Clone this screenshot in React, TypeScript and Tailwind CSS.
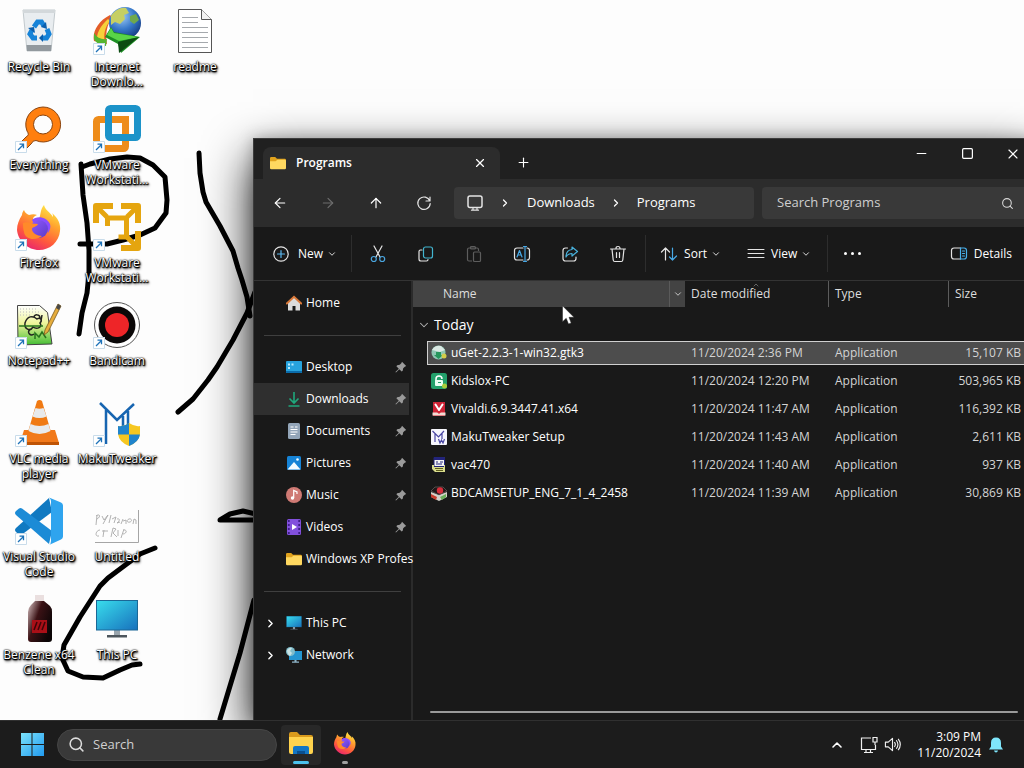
import React from 'react';
import {
  ArrowLeft,
  ArrowRight,
  ArrowUp,
  ChevronDown,
  ChevronRight,
  ChevronUp,
  Minus,
  Plus,
  Search,
  Square,
  X,
} from 'lucide-react';

/* ---------- shared drawings ---------- */

const FolderIcon = ({ className }: { className: string }) => (
  <svg viewBox="0 0 16 16" className={className}>
    <path d="M0 3.2Q0 2 1.2 2h4L7 3.8h7.8Q16 3.8 16 5v8H0z" fill="#e0a21d" />
    <path d="M0 6.2h5.6L7.4 4.8h7.4Q16 4.8 16 6v7q0 1.2-1.2 1.2H1.2Q0 14.200 0 13z" fill="#ffd860" />
  </svg>
);

const FirefoxIcon = ({ className }: { className: string }) => (
  <svg viewBox="0 0 48 48" className={className}>
    <defs>
      <linearGradient id="fxBody" x1="0.8" y1="0" x2="0.3" y2="1">
        <stop offset="0" stopColor="#fff04a" />
        <stop offset="0.35" stopColor="#ffa52e" />
        <stop offset="0.7" stopColor="#ff5a3c" />
        <stop offset="1" stopColor="#e8246f" />
      </linearGradient>
      <linearGradient id="fxGlobe" x1="0" y1="0" x2="1" y2="1">
        <stop offset="0" stopColor="#9059ff" />
        <stop offset="1" stopColor="#5b3bc9" />
      </linearGradient>
    </defs>
    <path
      d="M7 12c0-2 1-4 2-5 1 3 3 4 5 5 3-1 6-1 8 0-3 1-4 3-4 4h6c2-5 1-9 5-14 1 5 6 7 9 12 0-1 0-3-1-4 6 5 9 11 8 18C44 39 35 47 24 47S3 38 2 27c0-6 2-10 5-15z"
      fill="url(#fxBody)"
    />
    <path d="M17 17c5-5 15-3 18 4 1 3 0 6-2 9 0-6-5-9-9-9-3 0-6-1-7-4z" fill="#8a4dff" />
    <circle cx="24" cy="26" r="9" fill="url(#fxGlobe)" />
    <path d="M8 20c5-2 7 1 15 1-1 3-6 3-6 5 0 4 5 7 10 7-6 5-17 4-18-4-1-3-1-6-1-9z" fill="#ff8a2a" />
  </svg>
);

const MonitorIcon = ({ className }: { className: string }) => (
  <svg viewBox="0 0 44 40" className={className}>
    <defs>
      <linearGradient id="screen" x1="0" y1="0" x2="1" y2="1">
        <stop offset="0" stopColor="#38dcec" />
        <stop offset="1" stopColor="#1872bd" />
      </linearGradient>
    </defs>
    <path d="M19 31h6v6h-6z" fill="#9aa5ad" />
    <path d="M12 36h20v2.500H12z" fill="#4d565d" />
    <path d="M1 1h42v30.500H1z" fill="#1b6796" />
    <path d="M2 2h40v28.500H2z" fill="url(#screen)" />
  </svg>
);

const ShortcutBadge = () => (
  <svg viewBox="0 0 12 12" className="absolute bottom-0 left-0 size-3">
    <path d="M0 0h12v12H0z" fill="#fff" />
    <path d="M.5.5h11v11H.5z" fill="none" stroke="#c9dcea" />
    <path d="M3 9l5.500-5.500M4.500 3.200h4v4" fill="none" stroke="#1d72b8" strokeWidth="1.300" />
  </svg>
);

/* ---------- desktop icons ---------- */

const RecycleArt = () => (
  <svg viewBox="0 0 48 48" className="size-12">
    <path d="M8 3h32l-4 41H12z" fill="#e9edf0" stroke="#c3cace" />
    <path d="M8 3h32v3H8z" fill="#d3d8db" />
    <path d="M11.500 38h25L36 44H12z" fill="#92999e" />
    <g fill="none" stroke="#1683d8" strokeWidth="5">
      <path d="M19 20l3.500-5h4l2.500 4" />
      <path d="M32 22l2 5-2.500 4H27" />
      <path d="M22 31h-4l-3-4 2-4" />
    </g>
    <path d="M31 15l1 7-6-2zM28 35l-4-4 4-4zM13 21l6-1 1 6z" fill="#0a5fae" />
  </svg>
);

const IdmArt = () => (
  <svg viewBox="0 0 48 48" className="size-12">
    <defs>
      <radialGradient id="globe" cx="0.4" cy="0.3" r="0.8">
        <stop offset="0" stopColor="#9ecbf5" />
        <stop offset="0.5" stopColor="#3778c9" />
        <stop offset="1" stopColor="#0d2f74" />
      </radialGradient>
    </defs>
    <path d="M17 8C5 14-1 25 1 34l13 3c-2-10 0-19 5-27z" fill="#e35d28" />
    <path d="M15 12C7 19 3 27 4 35l8 1c-2-8 0-16 5-22z" fill="#f6d13a" />
    <path d="M1 26c3 5 8 7 13 6l-1 7C8 39 3 36 1 32z" fill="#54b530" />
    <circle cx="32" cy="16" r="16" fill="url(#globe)" />
    <path d="M18 9c4-6 10-9 15-8l3 5-5 2 1 4-5 5-5-2-4 3z" fill="#c6cf63" />
    <path d="M37 9l6-2 3 6-5 4-4-3z" fill="#6fa84c" />
    <path d="M12 30l6-10 3 5 26 5-19 16-3-9z" fill="#1d8f24" />
    <path d="M14 28l4-7 3 5 25 4-20 4z" fill="#59d547" />
    <path d="M25 35l21-5-20 16z" fill="#0c4c12" />
  </svg>
);

const ReadmeArt = () => (
  <svg viewBox="0 0 48 48" className="size-12">
    <path d="M7.500 2.500h23l10 10v33h-33z" fill="#fff" stroke="#555" />
    <path d="M30.500 2.500v10h10" fill="#f2f2f2" stroke="#555" />
    <path
      d="M11 10.500h16M11 15.500h16M11 20.500h26M11 25.500h26M11 30.500h26M11 35.500h26M11 40.500h26"
      stroke="#a5a9ad"
    />
  </svg>
);

const EverythingArt = () => (
  <svg viewBox="0 0 48 48" className="size-12">
    <path
      d="M28 2a17.500 17.500 0 1 1-7 33.500Q18 35 16 39l-7 7-6-6 8-8q4-2 1-6A17.500 17.500 0 0 1 28 2zm0 8a9.500 9.500 0 1 0 0 19 9.500 9.500 0 0 0 0-19z"
      fill="#ff7f0f"
      stroke="#8a4510"
    />
  </svg>
);

const WorkstationArt = () => (
  <svg viewBox="0 0 48 48" className="size-12">
    <rect x="3.500" y="14.500" width="29" height="29" rx="2" fill="none" stroke="#ee8c1a" strokeWidth="7" strokeLinejoin="round" />
    <rect x="15.500" y="3.500" width="29" height="29" rx="2" fill="none" stroke="#1c93c9" strokeWidth="7" strokeLinejoin="round" />
    <path d="M19 14.500h13.500v14.500" fill="none" stroke="#ee8c1a" strokeWidth="7" />
  </svg>
);

// three arrows leaving the corners of an open square
const PlayerArt = () => (
  <svg viewBox="0 0 48 48" className="size-12" fill="none" stroke="#e5a50f" strokeWidth="6">
    <path d="M20 3H3v17M28 3h17v17M45 28v17H28" strokeLinejoin="round" />
    <path d="M14.500 23v-8h19v19h-8" strokeWidth="5" />
    <path d="M4 4l10 10M44 4L34 14M44 44L34 34" strokeWidth="5" />
  </svg>
);

const NotepadArt = () => (
  <svg viewBox="0 0 48 48" className="size-12">
    <defs>
      <linearGradient id="npp" x1="0" y1="0" x2="0" y2="1">
        <stop offset="0" stopColor="#fff" />
        <stop offset="0.45" stopColor="#eef59a" />
        <stop offset="1" stopColor="#43bd35" />
      </linearGradient>
    </defs>
    <path d="M2.500 4.500h22l8 7L37 43 3 44z" fill="url(#npp)" stroke="#444" />
    <path d="M5 8h17M5 11h20M5 14h10" stroke="#bbb" strokeDasharray="1 2" />
    <path d="M10 22c2-7 8-8 12-4 3-2 6 1 3 4 3 4-3 7-7 4-3 5-9 2-8-4zM19 16c0-3 6-3 6 1M27 14l-1 6M15 29c-4 2 1 7 4 4" fill="none" stroke="#222" strokeWidth="1.500" />
    <path d="M4 25h24M20 38v-6l4 4 3-5 4 6" stroke="#26731d" strokeWidth="1.500" fill="none" />
    <path d="M43 3l3 2-13 26-4 3 1-5z" fill="#e6ad3d" stroke="#79591e" strokeWidth=".8" />
    <path d="M43 3l3 2-2 4-3-2z" fill="#494949" />
  </svg>
);

const BandicamArt = () => (
  <svg viewBox="0 0 48 48" className="size-12">
    <circle cx="24" cy="24" r="22.500" fill="#fff" stroke="#555" />
    <circle cx="24" cy="24" r="18.500" fill="#0b0808" />
    <circle cx="24" cy="24" r="12" fill="#ee2528" />
  </svg>
);

const VlcArt = () => (
  <svg viewBox="0 0 48 48" className="size-12">
    <path d="M9 31h31l4 13H5z" fill="#f1791a" />
    <path d="M5 43h39v3H5z" fill="#bf5405" />
    <path d="M22 2q2.500-2 5 0l9 31q-12 6-23 0z" fill="#f07a13" />
    <path d="M20.500 9q4 1.500 8 0l3 8.500q-7 3-14 0zM15.500 25q9 4 18 0l2 7q-11 6-22 0z" fill="#e8eaeb" />
  </svg>
);

const MakuArt = () => (
  <svg viewBox="0 0 48 48" className="size-12">
    <path d="M7 4l17 17L41 5M13 11v34M30 17v14M35 12v17" fill="none" stroke="#1765b1" strokeWidth="2.500" />
    <path d="M36 24q6 4 11 3v8q-1 8-11 12-10-4-11-12v-8q6 1 11-3z" fill="#f6c721" />
    <path d="M36 24v11.500H25V27q6 1 11-3zM36 35.500h11Q46 43 36 47z" fill="#1f84cd" />
  </svg>
);

const CodeArt = () => (
  <svg viewBox="0 0 48 48" className="size-12">
    <path d="M34 1L1 31q-2 2 0 4l3 2.500q1.500 1 3 0L37 15z" fill="#1079c1" />
    <path d="M34 47L1 18q-2-2 0-4l3-2.500q1.500-1 3 0L37 34z" fill="#1c8bd6" />
    <path d="M34 .5l12 5q2 1 2 3v31q0 2-2 3L34 48q2-1 2-4V4q0-2-2-3.500z" fill="#2fa4ee" />
  </svg>
);

const UntitledArt = () => (
  <svg viewBox="0 0 48 48" className="size-12">
    <path d="M2 12h43v33H2z" fill="#fdfdfd" />
    <path d="M2 45.500h43.500V13" fill="none" stroke="#a5a5a5" />
    <path
      d="M4 18l-1 10M3 19c4-3 5 1 1 3M9 19l2 4 4-5-5 9M18 18l-2 8M19 22l4-2-2 6M24 22c4-1 2 3 0 4l3-1M30 22l-2 5M30 24l3-1v4M36 22c-3 1-2 4 1 3s1-4-1-3M40 27l1-5 2 1v4M7 33c-4 0-6 7-1 6M11 33l-1 7M9 34h6M18 40l2-9 3 1-3 4 4 4M25 33v6M31 32l-3 9M31 33c4 0 2 4-1 4"
      fill="none"
      stroke="#aaa"
      strokeWidth=".9"
    />
  </svg>
);

const BottleArt = () => (
  <svg viewBox="0 0 48 48" className="size-12">
    <defs>
      <linearGradient id="bottle" x1="0" y1="0" x2="1" y2="0.6">
        <stop offset="0" stopColor="#d9c4c4" />
        <stop offset="0.45" stopColor="#3b1215" />
        <stop offset="1" stopColor="#0b0506" />
      </linearGradient>
    </defs>
    <path d="M20 0h9v7h-9z" fill="#eadfdf" />
    <path d="M20 6h9l6 5q2 2 2 6v27q0 3-3 3H16q-3 0-3-3V17q0-4 3-7z" fill="url(#bottle)" />
    <path d="M17 25h15v13H17z" fill="#a90f17" />
    <path d="M19 35l3-8M23 35l3-8M27 35l3-8" stroke="#3e0508" strokeWidth="1.500" />
  </svg>
);

interface Shortcut {
  label: string;
  art: React.ReactNode;
  linked?: boolean;
}

const shortcuts: Shortcut[] = [
  { label: 'Recycle Bin', art: <RecycleArt /> },
  { label: 'Everything', art: <EverythingArt />, linked: true },
  { label: 'Firefox', art: <FirefoxIcon className="size-12" />, linked: true },
  { label: 'Notepad++', art: <NotepadArt />, linked: true },
  { label: 'VLC media player', art: <VlcArt />, linked: true },
  { label: 'Visual Studio Code', art: <CodeArt />, linked: true },
  { label: 'Benzene x64 Clean', art: <BottleArt /> },
  { label: 'Internet Downlo...', art: <IdmArt />, linked: true },
  { label: 'VMware Workstati...', art: <WorkstationArt />, linked: true },
  { label: 'VMware Workstati...', art: <PlayerArt />, linked: true },
  { label: 'Bandicam', art: <BandicamArt />, linked: true },
  { label: 'MakuTweaker', art: <MakuArt />, linked: true },
  { label: 'Untitled', art: <UntitledArt /> },
  { label: 'This PC', art: <MonitorIcon className="size-11" /> },
  { label: 'readme', art: <ReadmeArt /> },
];

// hand drawn lines of the wallpaper
const Wallpaper = () => (
  <svg
    width="1024"
    height="720"
    className="absolute top-0 left-0"
    fill="none"
    stroke="#000"
    strokeWidth="5"
    strokeLinecap="round"
    strokeLinejoin="round"
  >
    <path d="M81 164L83 195L87 223L89 250V273L87 293L82 313L79 334" />
    <path d="M82 167L90 164L110 159L127 157L140 158L153 165L165 177L167 200L166 213L155 228L140 235L123 240L107 244H80" />
    <path d="M199 153L200 173L203 192L206 202L220 226L233 251L238 268L242 280L247 297L250 316" />
    <path d="M255 292L247 313L233 340L217 367L208 380L193 399L178 412" />
    <path d="M256 520H220L230 514L243 511L256 514" />
    <path d="M155 548L140 554L120 569L108 578L100 586L80 617L64 645L62 658L68 671L83 677L103 678L120 670L132 665L140 664" />
    <path d="M254 600L240 653L220 719" />
  </svg>
);

const DesktopIcon = ({ label, art, linked }: Shortcut) => (
  <button className="flex h-[98px] flex-col items-center pt-[7px] text-xs/[15px] text-white">
    <span className="relative flex size-12 items-center justify-center">
      {art}
      {linked && <ShortcutBadge />}
    </span>
    <span className="mt-1 w-20 text-center [text-shadow:0_0_1px_#000,0_0_2px_#000,1px_1px_1px_#000,1px_1px_2px_#000,0_1px_1px_#000,1px_2px_3px_#000]">
      {label}
    </span>
  </button>
);

/* ---------- explorer: toolbar icons ---------- */

const Glyph = ({ children }: { children: React.ReactNode }) => (
  <svg viewBox="0 0 18 18" className="size-[18px] shrink-0" fill="none" stroke="#e4e4e4" strokeWidth="1.200" strokeLinecap="round" strokeLinejoin="round">
    {children}
  </svg>
);

const NewGlyph = () => (
  <Glyph>
    <circle cx="9" cy="9" r="7.200" />
    <path d="M9 5.500v7M5.500 9h7" stroke="#5bb8f0" />
  </Glyph>
);

const CutGlyph = () => (
  <Glyph>
    <path d="M5 1l6 11M13 1L7 12" />
    <circle cx="4.800" cy="14" r="2.500" stroke="#4aa6e0" />
    <circle cx="13.200" cy="14" r="2.500" stroke="#4aa6e0" />
  </Glyph>
);

const CopyGlyph = () => (
  <Glyph>
    <path d="M5 5H3.500Q2 5 2 6.500V14q0 2 2 2h5.500Q11 16 11 14.500" />
    <rect x="6.500" y="2" width="9" height="11" rx="2" stroke="#42b5d0" />
  </Glyph>
);

const PasteGlyph = () => (
  <svg viewBox="0 0 18 18" className="size-[18px]" fill="none" stroke="#5d5d5d" strokeWidth="1.200">
    <path d="M7 16H4q-1.500 0-1.500-1.500v-10Q2.500 3 4 3h8q1.500 0 1.500 1.500V6" />
    <rect x="5.500" y="1.500" width="5" height="2.500" rx="1" />
    <rect x="8.500" y="7" width="7" height="9.500" rx="1" />
  </svg>
);

const RenameGlyph = () => (
  <Glyph>
    <path d="M10 3H4Q1.500 3 1.500 5.500v7Q1.500 15 4 15h6M14 3q2.500 0 2.500 2.500v7Q16.500 15 14 15" />
    <path d="M4 12l2.500-6.500L9 12M5 10h3M12 1.500v15M10.500 1.500h3M10.500 16.500h3" stroke="#48a9e6" />
  </Glyph>
);

const ShareGlyph = () => (
  <Glyph>
    <path d="M6.500 3H4.500Q2 3 2 5.500v8Q2 16 4.500 16h8q2.500 0 2.500-2.500V12" />
    <path d="M11 2l5.500 4.500L11 11V8.500q-4 0-6 3.500 0-7 6-7.500z" stroke="#48b1dc" />
  </Glyph>
);

const TrashGlyph = () => (
  <Glyph>
    <path d="M1.500 4h15M7 3.500q0-2 2-2t2 2M3 4l1.200 11q.2 1.500 1.500 1.500h6.600q1.300 0 1.500-1.500L15 4M7.500 7.500v5M10.500 7.500v5" />
  </Glyph>
);

const SortGlyph = () => (
  <Glyph>
    <path d="M5.500 15V3M1.500 7l4-4 4 4" />
    <path d="M12.500 3v12M9.500 12l3 3 4-4" stroke="#48a9e6" />
  </Glyph>
);

const ViewGlyph = () => (
  <Glyph>
    <path d="M1 4.500h16M1 8.500h16M1 12.500h16" strokeWidth="1" />
  </Glyph>
);

const DetailsGlyph = () => (
  <Glyph>
    <path d="M10.500 3H4Q1.500 3 1.500 5.500v6Q1.500 14 4 14h6.500" />
    <path d="M10.500 3H14q2.500 0 2.500 2.500v6Q16.500 14 14 14h-3.500zM12.500 6h2M12.500 8.500h2M12.500 11h2" stroke="#48b1ee" />
  </Glyph>
);

const PcGlyph = () => (
  <Glyph>
    <rect x="2" y="2" width="14" height="11.500" rx="2" strokeWidth="1.500" />
    <path d="M7 14v2M11 14v2M5.500 16.200h7" />
  </Glyph>
);

const RefreshGlyph = () => (
  <Glyph>
    <path d="M14.800 7A6.200 6.200 0 1 0 15.200 9.500M15 3v4h-4" />
  </Glyph>
);

const Pin = () => (
  <svg viewBox="0 0 12 12" className="size-3 shrink-0" fill="#9b9b9b">
    <path d="M7 .8L11.200 5l-1.400.7-1.600 1.600-.5 2.500-1 .8L4.300 8.200 1 11.600l-.6-.6 3.400-3.300L1.400 5.300l.8-1 2.500-.5L6.300 2.200z" />
  </svg>
);

const Divider = () => <span className="h-[37px] w-px shrink-0 bg-[#2d2d2d]" />;

/* ---------- explorer: small coloured icons ---------- */

const HomeIcon = () => (
  <svg viewBox="0 0 16 16" className="size-4">
    <path d="M2 7l6-5 6 5v8.500H9.500V11h-3v4.500H2z" fill="#dcdcdc" />
    <path d="M.8 8.500L8 1.800l7.200 6.700" fill="none" stroke="#d9793a" strokeWidth="2" strokeLinecap="round" />
  </svg>
);

const DesktopFolderIcon = () => (
  <svg viewBox="0 0 16 16" className="size-4">
    <rect y="2" width="16" height="12" rx="1" fill="#27a3de" />
    <path d="M0 12h16v1q0 1-1 1H1q-1 0-1-1z" fill="#0b6cab" />
    <path d="M2 4.500h2v2H2zM2 8h2v2H2zM5.500 4.500h2v2h-2z" fill="#b9ecff" />
  </svg>
);

const DownloadsIcon = () => (
  <svg viewBox="0 0 16 16" className="size-4">
    <path d="M8 1v10.500M3.500 7.500L8 12l4.500-4.500M2.500 15h11" fill="none" stroke="#1fa87c" strokeWidth="1.600" />
  </svg>
);

const DocumentsIcon = () => (
  <svg viewBox="0 0 16 16" className="size-4">
    <rect x="2" width="12" height="16" rx="1.500" fill="#93a5b8" />
    <path d="M4.500 4h3M4.500 6.500h7M4.500 9h7M4.500 11.500h5M9 4h2.500" stroke="#fff" strokeWidth="1.200" />
  </svg>
);

const PicturesIcon = () => (
  <svg viewBox="0 0 16 16" className="size-4">
    <rect x="1" y="1" width="14" height="14" rx="1.500" fill="#1683d6" />
    <path d="M1.500 14.500L8 7l6.500 7.500z" fill="#f3fbff" />
    <circle cx="11.500" cy="4.500" r="1.300" fill="#f3fbff" />
  </svg>
);

const MusicIcon = () => (
  <svg viewBox="0 0 16 16" className="size-4">
    <circle cx="8" cy="8" r="8" fill="#cf7a74" />
    <circle cx="6.500" cy="11" r="1.700" fill="#fff" />
    <path d="M7.700 11V3.500L11 5v2" fill="none" stroke="#fff" strokeWidth="1.200" />
  </svg>
);

const VideosIcon = () => (
  <svg viewBox="0 0 16 16" className="size-4">
    <rect x="1" width="14" height="16" rx="1.500" fill="#8250dc" />
    <path d="M2.800 1v14M13.200 1v14" stroke="#3d1e86" strokeWidth="1.800" strokeDasharray="2 2" />
    <path d="M6 5l5 3-5 3z" fill="#fff" />
  </svg>
);

const NetworkIcon = () => (
  <svg viewBox="0 0 16 16" className="size-4">
    <path d="M3 4h13v9H3z" fill="#2495d1" />
    <path d="M8.500 13h2v1.800h-2zM6 14.600h7v1.200H6z" fill="#8db4c8" />
    <circle cx="4.500" cy="4.500" r="4.500" fill="#7fbccb" />
    <path d="M1 3q3-3 5-2L4 4l2 2-2 3Q1 7 1 3z" fill="#c9e3e4" />
  </svg>
);

const UgetIcon = () => (
  <svg viewBox="0 0 16 16" className="size-4">
    <circle cx="7.500" cy="7.500" r="7" fill="#8fc7b3" />
    <path d="M1 5q3-5 9-4l4 4-5 2-4-1z" fill="#dbe9e4" />
    <path d="M5 7h5v3h2l-4.500 4L3 10h2z" fill="#25975c" />
    <circle cx="13" cy="11" r="2.500" fill="#d3cd49" />
  </svg>
);

const KidsloxIcon = () => (
  <svg viewBox="0 0 16 16" className="size-4">
    <rect width="16" height="16" rx="2.500" fill="#23a06b" />
    <path d="M5 8V6q0-3 3-3t3 3" fill="none" stroke="#fff" strokeWidth="1.500" />
    <rect x="4" y="7" width="8" height="6" rx="1" fill="#e9fff4" />
    <path d="M7 9.500h3" stroke="#23a06b" />
    <circle cx="13.500" cy="13" r="2.500" fill="#a9cc3b" />
  </svg>
);

const VivaldiIcon = () => (
  <svg viewBox="0 0 16 16" className="size-4">
    <rect x="2" y="1" width="12" height="14" fill="#cf2436" />
    <path d="M4.500 3.500L8 9l3.500-5.500" fill="none" stroke="#fff" strokeWidth="2" strokeLinecap="round" />
    <path d="M1.500 11.500h13v3h-13z" fill="#f4dcd4" />
    <path d="M5 10l3 3 3-3z" fill="#cf2436" />
  </svg>
);

const MakuIcon = () => (
  <svg viewBox="0 0 16 16" className="size-4">
    <rect width="16" height="16" rx="1" fill="#f7f7fd" />
    <path d="M1.500 2l6 6L13 2M4 5v8M11 4v6M7.500 10l1.500 4 1.500-3 1.500 3 1.500-4" fill="none" stroke="#4a47a3" strokeWidth="1.200" />
  </svg>
);

const VacIcon = () => (
  <svg viewBox="0 0 16 16" className="size-4">
    <path d="M3 .5h10.500v9H3z" fill="#f4f4f4" stroke="#23247b" />
    <path d="M3 .5h10.500V3H3z" fill="#23247b" />
    <path d="M5 5h2M9 5h3M5 7h6" stroke="#23247b" />
    <path d="M1 8h2v2h10V8h1v7H4L1 12z" fill="#d9dc8c" />
    <path d="M4 11.500h8M5 13.500h7" stroke="#5c5d1e" />
  </svg>
);

const BdcamIcon = () => (
  <svg viewBox="0 0 16 16" className="size-4">
    <path d="M0 7l8 3 8-3v5l-8 4-8-4z" fill="#d4d0c8" />
    <path d="M0 6l4-4h8l4 4-8 4z" fill="#201718" stroke="#8a8078" strokeWidth=".5" />
    <circle cx="9" cy="5.500" r="3.200" fill="#d92e3c" />
    <path d="M0 9l6 3-1 3-5-3z" fill="#c73b2c" />
    <path d="M9 12l6-3v3l-4 3z" fill="#6cae5a" />
  </svg>
);

/* ---------- explorer ---------- */

const places = [
  { label: 'Desktop', icon: <DesktopFolderIcon />, pinned: true },
  { label: 'Downloads', icon: <DownloadsIcon />, pinned: true, active: true },
  { label: 'Documents', icon: <DocumentsIcon />, pinned: true },
  { label: 'Pictures', icon: <PicturesIcon />, pinned: true },
  { label: 'Music', icon: <MusicIcon />, pinned: true },
  { label: 'Videos', icon: <VideosIcon />, pinned: true },
  { label: 'Windows XP Profes', icon: <FolderIcon className="size-4" /> },
];

const files = [
  { name: 'uGet-2.2.3-1-win32.gtk3', icon: <UgetIcon />, date: '11/20/2024 2:36 PM', size: '15,107 KB', selected: true },
  { name: 'Kidslox-PC', icon: <KidsloxIcon />, date: '11/20/2024 12:20 PM', size: '503,965 KB' },
  { name: 'Vivaldi.6.9.3447.41.x64', icon: <VivaldiIcon />, date: '11/20/2024 11:47 AM', size: '116,392 KB' },
  { name: 'MakuTweaker Setup', icon: <MakuIcon />, date: '11/20/2024 11:43 AM', size: '2,611 KB' },
  { name: 'vac470', icon: <VacIcon />, date: '11/20/2024 11:40 AM', size: '937 KB' },
  { name: 'BDCAMSETUP_ENG_7_1_4_2458', icon: <BdcamIcon />, date: '11/20/2024 11:39 AM', size: '30,869 KB' },
];

interface PlaceProps {
  label: string;
  icon: React.ReactNode;
  pinned?: boolean;
  active?: boolean;
  expandable?: boolean;
}

const Place = ({ label, icon, pinned, active, expandable }: PlaceProps) => (
  <button
    className={`flex h-8 w-full items-center gap-1 pl-2.5 text-left ${active ? 'bg-[#2f2f2f]' : ''}`}
  >
    <span className="w-[18px] shrink-0">{expandable && <ChevronRight size={13} strokeWidth={2.5} />}</span>
    <span className="shrink-0">{icon}</span>
    <span className="flex-1 whitespace-nowrap">{label}</span>
    {pinned && <span className="pr-0.5"><Pin /></span>}
  </button>
);

const Rule = () => (
  <div className="flex h-8 items-center pr-2 pl-2.5">
    <hr className="w-full border-[#3f3f3f]" />
  </div>
);

const Sidebar = () => (
  <nav className="w-[159px] shrink-0 border-r-2 border-[#2b2b2b] pt-1.5">
    <div className="pr-0.5">
      <Place label="Home" icon={<HomeIcon />} />
      <Rule />
      {places.map((p) => (
        <Place key={p.label} {...p} />
      ))}
      <Rule />
      <Place label="This PC" icon={<MonitorIcon className="size-4" />} expandable />
      <Place label="Network" icon={<NetworkIcon />} expandable />
    </div>
  </nav>
);

const FileList = () => (
  <div className="flex min-w-0 flex-1 flex-col">
    <table className="w-full table-fixed border-separate border-spacing-0 text-left">
      <colgroup>
        <col className="w-3.5" />
        <col className="w-[258px]" />
        <col className="w-[143px]" />
        <col className="w-[120px]" />
        <col />
      </colgroup>
      <thead className="text-[#dedede]">
        <tr className="h-[26px]">
          <th colSpan={2} className="bg-[#434343] p-0 font-normal">
            <div className="flex h-[26px] items-center pl-[30px]">
              <span className="flex-1">Name</span>
              <span className="flex h-full w-4 items-center justify-center border-l border-[#5a5a5a]">
                <ChevronDown size={10} />
              </span>
            </div>
          </th>
          <th className="relative p-0 pl-1.5 font-normal">
            <ChevronUp size={8} className="absolute top-0 left-[67px] text-[#8a8a8a]" />
            Date modified
          </th>
          <th className="border-l border-[#5c5c5c] p-0 pl-1.5 font-normal">Type</th>
          <th className="border-l border-[#5c5c5c] p-0 pl-1.5 font-normal">Size</th>
        </tr>
      </thead>
      <tbody>
        <tr className="h-8">
          <td colSpan={5} className="p-0 pt-1 pl-1">
            <button className="flex items-center gap-[3px] text-sm/5">
              <ChevronDown size={14} strokeWidth={1.8} className="text-[#b5b5b5]" />
              Today
            </button>
          </td>
        </tr>
        {files.map((f) => {
          const cell = f.selected ? 'border-y border-[#d0d0d0] bg-[#4d4d4d]' : 'border-y border-transparent';
          return (
            <tr key={f.name} className="h-7">
              <td className="p-0" />
              <td className="p-0">
                <div className={`flex h-6 items-center gap-1 pl-[3px] whitespace-nowrap ${cell} border-l`}>
                  {f.icon}
                  {f.name}
                </div>
              </td>
              <td className="p-0 text-[#d4d4d4]">
                <div className={`flex h-6 items-center pl-1.5 whitespace-nowrap ${cell}`}>{f.date}</div>
              </td>
              <td className="p-0 text-[#d4d4d4]">
                <div className={`flex h-6 items-center pl-[7px] ${cell}`}>Application</div>
              </td>
              <td className="p-0 text-[#d4d4d4]">
                <div className={`flex h-6 items-center justify-end pr-[15px] whitespace-nowrap ${cell}`}>{f.size}</div>
              </td>
            </tr>
          );
        })}
      </tbody>
    </table>
    <div className="mt-auto mr-[18px] mb-[7px] ml-[17px] h-0.5 rounded-full bg-[#9a9a9a]" />
  </div>
);

const Explorer = () => (
  <section className="absolute top-[138px] -right-3 bottom-0 left-[253px] flex flex-col border-t border-l border-[#3c3c3c] bg-[#191919] text-xs text-white shadow-[0_20px_46px_rgba(0,0,0,0.95),0_0_14px_rgba(0,0,0,0.25)]">
    <header className="flex h-10 shrink-0 bg-[#202020]">
      <div className="mt-2 ml-[9px] flex w-[237px] items-center rounded-t-lg bg-[#2c2c2c] pr-2.5 pl-[7px]">
        <FolderIcon className="size-4" />
        <span className="ml-2.5 flex-1 font-semibold">Programs</span>
        <button aria-label="Close tab" className="flex size-5 items-center justify-center">
          <X size={14} strokeWidth={2} />
        </button>
      </div>
      <button aria-label="New tab" className="ml-[13px] flex w-5 items-center justify-center pt-1.5">
        <Plus size={15} strokeWidth={1.8} />
      </button>
      <div className="ml-auto flex h-[29px]">
        <button aria-label="Minimize" className="flex w-[46px] items-center justify-center">
          <Minus size={15} strokeWidth={1.6} />
        </button>
        <button aria-label="Maximize" className="flex w-[46px] items-center justify-center">
          <Square size={13} strokeWidth={2.2} />
        </button>
        <button aria-label="Close" className="flex w-[46px] items-center justify-center">
          <X size={16} strokeWidth={1.7} />
        </button>
      </div>
    </header>

    <div className="flex h-12 shrink-0 items-center bg-[#2c2c2c] pr-2 pl-0.5">
      <button aria-label="Back" className="flex w-12 justify-center">
        <ArrowLeft size={16} strokeWidth={1.8} />
      </button>
      <button aria-label="Forward" className="flex w-12 justify-center text-[#6d6d6d]">
        <ArrowRight size={16} strokeWidth={1.8} />
      </button>
      <button aria-label="Up" className="flex w-12 justify-center">
        <ArrowUp size={16} strokeWidth={1.8} />
      </button>
      <button aria-label="Refresh" className="flex w-12 justify-center">
        <RefreshGlyph />
      </button>
      <div className="mr-2 ml-1.5 flex h-8 min-w-0 flex-1 items-center rounded bg-[#393939] pl-3 text-[13px]">
        <PcGlyph />
        <ChevronRight size={12} strokeWidth={2.5} className="mr-4 ml-[15px]" />
        <button>Downloads</button>
        <ChevronRight size={12} strokeWidth={2.5} className="mx-[15px]" />
        <button>Programs</button>
      </div>
      <div className="flex h-8 w-[266px] shrink-0 items-center rounded bg-[#393939] pr-3.5 pl-[15px] text-[13px]">
        <input
          aria-label="Search Programs"
          placeholder="Search Programs"
          className="min-w-0 flex-1 bg-transparent outline-none placeholder:text-[#cfcfcf]"
        />
        <Search size={13} strokeWidth={2} className="text-[#d8d8d8]" />
      </div>
    </div>

    <div className="flex h-[54px] shrink-0 items-center border-b border-[#333333] pl-[18px]">
      <button className="mr-3.5 flex items-center">
        <NewGlyph />
        <span className="mr-1 ml-2">New</span>
        <ChevronDown size={10} />
      </button>
      <Divider />
      <div className="flex pl-0.5">
        <button aria-label="Cut" className="flex w-12 justify-center"><CutGlyph /></button>
        <button aria-label="Copy" className="flex w-12 justify-center"><CopyGlyph /></button>
        <button aria-label="Paste" className="flex w-12 justify-center"><PasteGlyph /></button>
        <button aria-label="Rename" className="flex w-12 justify-center"><RenameGlyph /></button>
        <button aria-label="Share" className="flex w-12 justify-center"><ShareGlyph /></button>
        <button aria-label="Delete" className="flex w-12 justify-center"><TrashGlyph /></button>
      </div>
      <span className="w-[3px]" />
      <Divider />
      <button className="ml-3.5 flex items-center">
        <SortGlyph />
        <span className="mr-1 ml-1.5">Sort</span>
        <ChevronDown size={10} />
      </button>
      <button className="mr-4 ml-[26px] flex items-center">
        <ViewGlyph />
        <span className="mr-1 ml-1.5">View</span>
        <ChevronDown size={10} />
      </button>
      <Divider />
      <button aria-label="More" className="ml-4 flex gap-1">
        <span className="size-[3px] rounded-full bg-white" />
        <span className="size-[3px] rounded-full bg-white" />
        <span className="size-[3px] rounded-full bg-white" />
      </button>
      <button className="mr-6 ml-auto flex items-center gap-1.5">
        <DetailsGlyph />
        Details
      </button>
    </div>

    <div className="flex min-h-0 flex-1">
      <Sidebar />
      <FileList />
    </div>
  </section>
);

/* ---------- taskbar ---------- */

const Taskbar = () => (
  <footer className="relative flex h-12 shrink-0 items-center border-t border-[#303030] bg-[#1c1c1c] pr-5 pl-5 text-white">
    <button aria-label="Start">
      <svg viewBox="0 0 24 24" className="size-6">
        <defs>
          <linearGradient id="start" x1="0" y1="0" x2="1" y2="1">
            <stop offset="0" stopColor="#7be3fb" />
            <stop offset="1" stopColor="#219af0" />
          </linearGradient>
        </defs>
        <path d="M1 0h10.500v11H1zM12.500 0H24v11H12.500zM1 12h10.500v11H1zM12.500 12H24v11H12.500z" fill="url(#start)" />
      </svg>
    </button>
    <div className="ml-[13px] flex h-8 w-[220px] items-center rounded-full border border-[#454545] bg-[#393939] pl-2.5">
      <Search size={17} strokeWidth={2.2} className="text-[#dcdcdc]" />
      <input
        aria-label="Search"
        placeholder="Search"
        className="ml-2 min-w-0 flex-1 bg-transparent text-[13px] outline-none placeholder:text-[#d0d0d0]"
      />
    </div>
    <button aria-label="File Explorer" className="ml-1 flex h-10 w-10 flex-col items-center rounded bg-[#282828] pt-1.5">
      <svg viewBox="0 0 26 24" className="h-6 w-[26px]">
        <path d="M1 3q0-2 2-2h6l3 3h11q2 0 2 2v6H1z" fill="#d99a1c" />
        <path d="M1 6h24v15q0 2-2 2H3q-2 0-2-2z" fill="#ffd34d" />
        <path d="M5 23v-6q0-2 2-2h12q2 0 2 2v6z" fill="#1376c4" />
        <path d="M9 23v-3h8v3z" fill="#0a4f8f" />
      </svg>
      <span className="mt-1.5 h-[3px] w-4 rounded-full bg-[#4cc2ee]" />
    </button>
    <button aria-label="Firefox" className="ml-1 flex h-10 w-10 flex-col items-center pt-1.5">
      <FirefoxIcon className="size-6" />
      <span className="mt-1.5 h-[3px] w-1.5 rounded-full bg-[#a0a0a0]" />
    </button>
    <div className="ml-auto flex items-center">
      <button aria-label="Show hidden icons">
        <ChevronUp size={16} strokeWidth={2.4} />
      </button>
      <svg viewBox="0 0 18 18" className="ml-[15px] size-[18px]" fill="none" stroke="#f0f0f0" strokeWidth="1.200">
        <path d="M11 2H1.500v11.500h14V9M6 14v2.500M10.500 14v2.500M4 16.500h9" />
        <path d="M13 1.500h4V6h-4zM15 6v3" />
      </svg>
      <svg viewBox="0 0 18 18" className="ml-1.5 size-[17px]" fill="none" stroke="#f0f0f0" strokeWidth="1.200" strokeLinejoin="round">
        <path d="M1.500 6.500v5h3L9 15.500v-13l-4.500 4zM11 6.500q2 2.500 0 5M13 4.500q3.500 4.500 0 9M15 3q4.500 6 0 12" />
      </svg>
      <div className="ml-4 text-right text-xs/4">
        <div>3:09 PM</div>
        <div>11/20/2024</div>
      </div>
      <svg viewBox="0 0 16 16" className="ml-[7px] size-4" fill="#7fe6fb">
        <path d="M8 .5q5 0 5 5.500v3.500l2 3H1l2-3V6Q3 .5 8 .5zM6 13.500h4q-.5 2-2 2t-2-2z" />
      </svg>
    </div>
  </footer>
);

export default function App() {
  return (
    <div className="flex h-screen flex-col overflow-hidden font-['Open_Sans','Noto_Sans',sans-serif]">
      <main className="relative flex-1 overflow-hidden bg-[#fdfdfd]">
        <Wallpaper />
        <div className="relative grid w-fit grid-flow-col grid-cols-[78px_78px_78px] grid-rows-[repeat(7,98px)]">
          {shortcuts.map((s, i) => (
            <DesktopIcon key={i} {...s} />
          ))}
        </div>
        <Explorer />
        <svg viewBox="0 0 12 20" className="absolute top-[305px] left-[562px] h-5 w-3">
          <path d="M.5.800v16l3.700-3.500 2.300 5.700 2.700-1.100L7 12.300h5z" fill="#fff" stroke="#222" strokeWidth=".5" />
        </svg>
      </main>
      <Taskbar />
    </div>
  );
}
